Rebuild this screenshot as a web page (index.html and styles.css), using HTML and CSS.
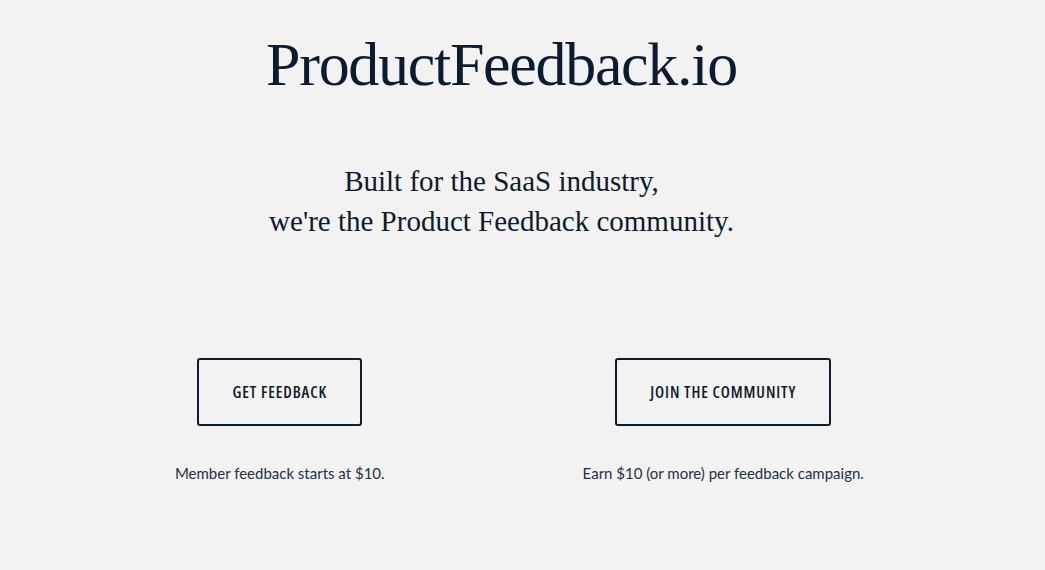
FILE: index.html
```html
<!DOCTYPE html>
<html lang="en">
<head>
<meta charset="utf-8">
<title>ProductFeedback.io</title>
<link rel="stylesheet" href="styles.css">
</head>
<body>
<main class="page">
  <h1 class="title">ProductFeedback.io</h1>
  <p class="tagline">Built for the SaaS industry,<br>we're the Product Feedback community.</p>
  <div class="actions">
    <div class="action">
      <a class="btn" href="#">GET FEEDBACK</a>
      <p class="note">Member feedback starts at $10.</p>
    </div>
    <div class="action">
      <a class="btn" href="#">JOIN THE COMMUNITY</a>
      <p class="note">Earn $10 (or more) per feedback campaign.</p>
    </div>
  </div>
</main>
</body>
</html>
```
FILE: styles.css
```css
html, body {
  margin: 0;
  padding: 0;
  background: #f2f2f2;
  color: #0d1b2e;
}
.page {
  width: 887px;
  margin-left: 58px;
  padding-top: 28px;
}
.title {
  margin: 0;
  text-align: center;
  font-family: "Liberation Serif", serif;
  font-weight: normal;
  font-size: 62px;
  letter-spacing: -1.3px;
  line-height: 72px;
}
.tagline {
  margin: 61px 0 0;
  text-align: center;
  font-family: "Liberation Serif", serif;
  font-size: 29px;
  line-height: 40px;
}
.actions {
  display: grid;
  grid-template-columns: 1fr 1fr;
  margin-top: 117px;
}
.action {
  display: flex;
  flex-direction: column;
  align-items: center;
}
.btn {
  display: flex;
  align-items: center;
  justify-content: center;
  height: 68px;
  box-sizing: border-box;
  padding: 0 33px;
  border: 2px solid #0d1b2e;
  border-radius: 3px;
  color: #0d1b2e;
  text-decoration: none;
  font-family: "Open Sans", sans-serif;
  font-stretch: 75%;
  font-weight: 600;
  font-size: 16px;
  letter-spacing: 0.9px;
}
.note {
  margin: 38px 0 0;
  font-family: "Lato", sans-serif;
  font-size: 15px;
  color: #243044;
}
```
